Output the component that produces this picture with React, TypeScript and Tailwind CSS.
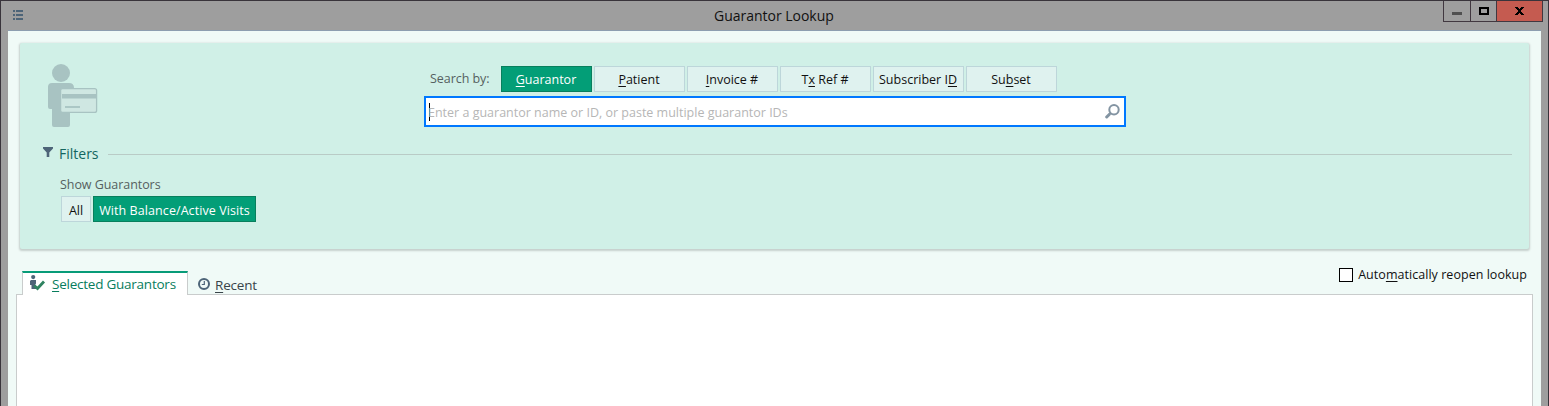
import type { ReactNode } from "react";

function Key({ children }: { children: ReactNode }) {
  return <span className="underline decoration-1 underline-offset-2">{children}</span>;
}

function SearchMode({ active, children }: { active?: boolean; children: ReactNode }) {
  return (
    <button
      className={
        "h-[26px] w-[91px] border pr-px text-center leading-[25px] whitespace-nowrap " +
        (active ? "border-[#087f5d] bg-[#039e77] text-white" : "border-[#bdd6da] bg-[#dff2ef] text-[#111]")
      }
    >
      {children}
    </button>
  );
}

function TitleBar() {
  return (
    <header className="flex h-[30px] items-start justify-between">
      <svg className="mt-[9px] ml-3 h-[10px] w-[10px]" viewBox="0 0 10 10" fill="#4d6478" shapeRendering="crispEdges">
        <path d="M0 0h2v2H0zM3 0h7v2H3zM0 4h2v2H0zM3 4h7v2H3zM0 8h2v2H0zM3 8h7v2H3z" />
      </svg>
      <h1 className="ml-[691px] flex-1 pt-[5px] text-[14px] leading-[20px] tracking-[-0.02px] text-[#111]">Guarantor Lookup</h1>
      <div className="mr-[5px] flex h-[21px] border border-t-0 border-[#413840]">
        <button className="h-5 w-[27px] border-r border-[#413840]">
          <svg className="h-5 w-[26px]" viewBox="0 0 26 20" shapeRendering="crispEdges">
            <path d="M8 11h10v3H8z" fill="#505050" />
          </svg>
        </button>
        <button className="h-5 w-[26px] border-r border-[#413840]">
          <svg className="h-5 w-[25px]" viewBox="0 0 25 20" shapeRendering="crispEdges">
            <path d="M8 6h10v8H8zM10 8v4h6V8z" fill="#000" fillRule="evenodd" />
          </svg>
        </button>
        <button className="h-5 w-[45px] bg-[#c55b50]">
          <svg className="h-5 w-[45px]" viewBox="0 0 45 20" shapeRendering="crispEdges">
            <path d="M18 6h3v1h1v1h1V7h1V6h3v1h-1v1h-1v1h-1v2h1v1h1v1h1v1h-3v-1h-1v-1h-1v1h-1v1h-3v-1h1v-1h1v-1h1V9h-1V8h-1V7h-1z" fill="#000" />
          </svg>
        </button>
      </div>
    </header>
  );
}

function GuarantorArt() {
  return (
    <svg className="h-[64px] w-[52px]" viewBox="0 0 52 64">
      <g fill="#a8c3c2">
        <circle cx="14" cy="9" r="9" />
        <path d="M5 19h17q5 0 5 5v8h-4v29q0 2-2 2H7q-2 0-2-2V45H3q-2 0-2-2V23q0-4 4-4z" />
      </g>
      <rect x="13.6" y="24.6" width="36" height="23.8" rx="2" fill="#cfe7e2" stroke="#a8c3c2" strokeWidth="1.3" />
      <path d="M15 30h34v4.5H15z" fill="#a8c3c2" />
      <path d="M18 43h15" stroke="#a8c3c2" strokeWidth="1.8" />
    </svg>
  );
}

function SearchPanel() {
  return (
    <section className="mx-3 mt-3 h-[206px] rounded-[2px] bg-[#d0f0e7] shadow-[0_1px_2px_1px_#c6d0cd]">
      <div className="flex h-[104px]">
        <div className="ml-[27px] w-[377px] pt-[21px]">
          <GuarantorArt />
        </div>
        <div className="w-[702px] pt-[23px]">
          <div className="flex">
            <span className="w-[77px] pl-[6px] leading-[26px] tracking-[-0.05px] text-[#555f60]">Search by:</span>
            <div className="flex gap-[2px]">
              <SearchMode active><Key>G</Key>uarantor</SearchMode>
              <SearchMode><Key>P</Key>atient</SearchMode>
              <SearchMode><Key>I</Key>nvoice #</SearchMode>
              <SearchMode>T<Key>x</Key> Ref #</SearchMode>
              <SearchMode>Subscriber I<Key>D</Key></SearchMode>
              <SearchMode>Su<Key>b</Key>set</SearchMode>
            </div>
          </div>
          <div className="mt-1 flex h-[31px] items-center border-2 border-[#0078ff] bg-white pr-[4px] pl-[3px]">
            <span className="h-[18px] w-px bg-black" />
            <span className="-ml-[2px] flex-1 pt-[2px] leading-[20px] text-[#b6b6b6]">Enter a guarantor name or ID, or paste multiple guarantor IDs</span>
            <svg className="h-[15px] w-[15px]" viewBox="0 0 15 15" fill="none" stroke="#8394a2">
              <circle cx="9" cy="5.7" r="4.7" strokeWidth="2" />
              <path d="M5.5 9.2L4 10.7" strokeWidth="2" />
              <path d="M4 10.7L1.7 13" strokeWidth="3" strokeLinecap="round" />
            </svg>
          </div>
        </div>
      </div>
      <div className="flex h-[13px] items-center pr-[17px] pl-[23px]">
        <svg className="mb-[3px] h-[10px] w-[10px]" viewBox="0 0 10 10" fill="#4d6478">
          <path d="M0 0h10v1.5L6.3 5.5V10H3.7V5.5L0 1.5z" />
        </svg>
        <h2 className="ml-[6px] w-[49px] text-[14px] leading-[20px] text-[#13665f]">Filters</h2>
        <hr className="mt-px flex-1 border-[#b9cbc6]" />
      </div>
      <div className="pt-[14px] pl-[41px]">
        <div className="-ml-px h-[22px] pt-px leading-[20px] tracking-[-0.06px] text-[#555f60]">Show Guarantors</div>
        <div className="flex gap-[2px]">
          <button className="h-[26px] w-[30px] border border-[#bdd6da] bg-[#dff2ef] pt-px leading-[25px] text-[#111]">All</button>
          <button className="h-[26px] w-[163px] border border-[#087f5d] bg-[#039e77] pt-px leading-[25px] tracking-[0.08px] whitespace-nowrap text-white">With Balance/Active Visits</button>
        </div>
      </div>
    </section>
  );
}

function SelectedIcon() {
  return (
    <svg className="h-[16px] w-[16px]" viewBox="0 0 16 16">
      <g fill="#4d6478">
        <circle cx="3.2" cy="2.1" r="2.1" />
        <path d="M1 5h5v3.5L5 10l1 1v3H1.5v-4H0V6z" />
      </g>
      <path d="M4.2 10.5L7.5 13.5L14 6.5" fill="none" stroke="#2f8360" strokeWidth="2.8" />
    </svg>
  );
}

function Results() {
  return (
    <section className="mr-2 ml-2 flex flex-1 flex-col">
      <div className="mt-[17px] flex h-[28px] items-end justify-between">
        <div className="flex h-[28px] items-end">
          <div className="relative z-10 -mb-px ml-[6px] flex h-[24px] w-[166px] border-x border-t-2 border-x-[#c9cccc] border-t-[#079b78] bg-white pt-[2px] pl-[7px]">
            <SelectedIcon />
            <span className="ml-[6px] -mt-px text-[13.5px] leading-[20px] tracking-[-0.24px] whitespace-nowrap text-[#087d5d]"><Key>S</Key>elected Guarantors</span>
          </div>
          <div className="flex h-[24px] pl-[10px]">
            <svg className="mt-[8px] h-[12px] w-[12px]" viewBox="0 0 12 12" fill="none" stroke="#4d6478">
              <circle cx="6" cy="6" r="5" strokeWidth="2" />
              <path d="M6.3 3v3.5H3.8" strokeWidth="1.2" />
            </svg>
            <span className="ml-[5px] pt-[5px] text-[13.5px] leading-[20px] tracking-[-0.2px] text-[#39444a]"><Key>R</Key>ecent</span>
          </div>
        </div>
        <label className="mr-[6px] flex h-[28px] items-start">
          <span className="mt-[2px] mr-[5px] h-[14px] w-[14px] border border-black bg-white" />
          <span className="-mt-px leading-[20px] tracking-[0.04px] text-[#111]">Auto<Key>m</Key>atically reopen lookup</span>
        </label>
      </div>
      <div className="flex-1 border border-b-0 border-[#c9cccc] bg-white" />
    </section>
  );
}

export default function App() {
  return (
    <main className="flex h-[406px] w-[1549px] flex-col overflow-hidden border border-b-0 border-[#39343b] bg-[#9e9e9e] font-['Open_Sans','Noto_Sans',sans-serif] text-[12.5px]">
      <TitleBar />
      <div className="mr-[7px] ml-[7px] flex flex-1 flex-col bg-[#f0faf7] shadow-[0_-1px_0_#8d9eb0]">
        <SearchPanel />
        <Results />
      </div>
    </main>
  );
}
